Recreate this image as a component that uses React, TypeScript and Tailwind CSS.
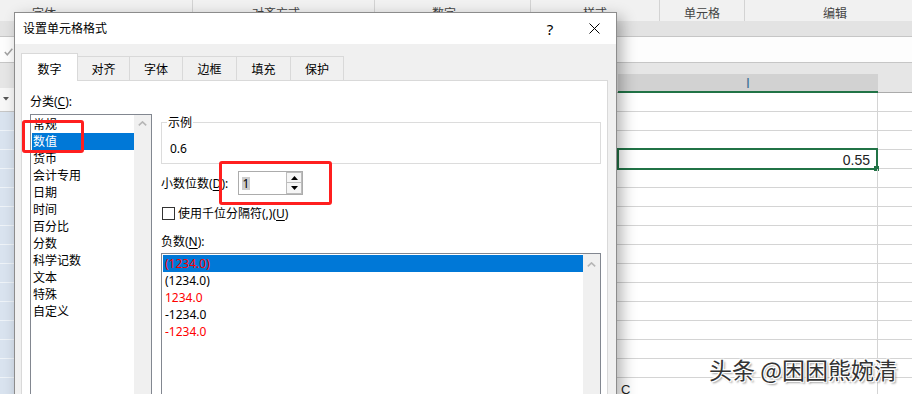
import React from "react";

const FONT = "font-['Noto_Sans','Noto_Sans_CJK_SC',sans-serif]";

const categories = ["常规", "数值", "货币", "会计专用", "日期", "时间", "百分比", "分数", "科学记数", "文本", "特殊", "自定义"];

const negatives = [
  { t: "(1234.0)", red: true },
  { t: "(1234.0)", red: false },
  { t: "1234.0", red: true },
  { t: "-1234.0", red: false },
  { t: "-1234.0", red: true },
];

const groups = [
  { label: "字体", cls: "w-[179px] pl-[18px] border-r" },
  { label: "对齐方式", cls: "w-[182px] pl-[59px] border-r" },
  { label: "数字", cls: "w-[156px] pl-[57px] border-r" },
  { label: "样式", cls: "w-[129px] pl-[52px] border-r" },
  { label: "单元格", cls: "w-[85px] pl-[24px] border-r" },
  { label: "编辑", cls: "flex-1 pl-[78px]" },
];

const tabs = [
  { label: "对齐", cls: "w-[52px]" },
  { label: "字体", cls: "w-[53px]" },
  { label: "边框", cls: "w-[54px]" },
  { label: "填充", cls: "w-[54px]" },
  { label: "保护", cls: "w-[53px]" },
];

function Chevron() {
  return (
    <svg width="9" height="5" viewBox="0 0 9 5" className="block">
      <path d="M0.8 4.4 L4.5 0.9 L8.2 4.4" fill="none" stroke="#b6b6b6" strokeWidth="1.6" />
    </svg>
  );
}

function Tri({ down }: { down?: boolean }) {
  return (
    <svg width="7" height="4" viewBox="0 0 7 4" className="block">
      {down ? <path d="M0 0 L7 0 L3.5 4 Z" fill="#000" /> : <path d="M0 4 L7 4 L3.5 0 Z" fill="#000" />}
    </svg>
  );
}

export default function App() {
  const rows = Array.from({ length: 16 });
  return (
    <div className={`relative w-[912px] h-[394px] overflow-hidden bg-white ${FONT}`}>
      <div className="flex h-full">
        {/* left strip */}
        <div className="w-[14px] shrink-0 flex flex-col">
          <div className="h-[21px] shrink-0 bg-[#f1f1f1]" />
          <div className="h-[16px] shrink-0 bg-[#e3e3e3] border-b border-[#c6c6c6]" />
          <div className="h-[26px] shrink-0 bg-[#fdfdfd] border-b border-[#c6c6c6] flex items-start pt-[11px] pl-[4px]">
            <svg width="9" height="8" viewBox="0 0 9 8" className="block">
              <path d="M0.8 4 L3.3 6.8 L8.3 0.8" fill="none" stroke="#a3a3a3" strokeWidth="1.5" />
            </svg>
          </div>
          <div className="h-[25px] shrink-0 bg-[#e6e6e6]" />
          <div className="h-[24px] shrink-0 bg-[#f7f7f7] border-b border-[#c6c6c6] flex items-center pl-[3px] pb-[2px]">
            <svg width="6" height="4" viewBox="0 0 6 4" className="block">
              <path d="M0 0 L6 0 L3 3.5 Z" fill="#555" />
            </svg>
          </div>
          {rows.map((_, i) => (
            <div key={i} className="h-[19px] shrink-0 bg-[#d9e3ef] border-b border-[#eef3f8]" />
          ))}
        </div>

        {/* right area */}
        <div className="flex-1 flex flex-col">
          <div className="flex h-[21px] shrink-0 bg-[#f1f1f1]">
            {groups.map((g) => (
              <div key={g.label} className={`${g.cls} h-full border-[#d3d3d3] pt-[7px] text-[12px] leading-[14px] text-[#444]`}>
                {g.label}
              </div>
            ))}
          </div>
          <div className="h-[16px] shrink-0 bg-[#e3e3e3] border-b border-[#c6c6c6]" />
          <div className="h-[26px] shrink-0 bg-[#fdfdfd] border-b border-[#c6c6c6]" />
          <div className="h-[11px] shrink-0 bg-[#e6e6e6]" />
          <div className="flex h-[19px] shrink-0">
            <div className="w-[604px] bg-[#e6e6e6] border-b border-[#ababab]" />
            <div className="w-[260px] bg-[#d2d2d2] border-b-2 border-[#217346] flex justify-center items-center font-['Liberation_Sans',sans-serif] text-[14px] leading-[16px] text-[#3b6f94]">
              I
            </div>
            <div className="flex-1 bg-[#e6e6e6] border-b border-[#ababab]" />
          </div>
          {rows.map((_, i) => (
            <div key={i} className="flex h-[19px] shrink-0 border-b border-[#d4d4d4]">
              <div className="w-[604px]" />
              <div className="relative w-[260px] border-r border-[#d4d4d4] font-['Liberation_Sans',sans-serif] text-[14px] text-[#222]">
                {i === 3 && (
                  <>
                    <div className="flex justify-end pr-[7px] pt-[2px] leading-[17px]">0.55</div>
                    <div className="absolute -top-[2px] -left-[1px] w-[261px] h-[22px] border-2 border-[#217346]" />
                    <div className="absolute left-[256px] top-[16px] w-[5px] h-[5px] bg-[#217346]" />
                  </>
                )}
                {i === 15 && <div className="pl-[3px] pt-[3px] leading-[17px] text-[13px]">C</div>}
              </div>
              <div className="flex-1" />
            </div>
          ))}
        </div>
      </div>

      {/* dialog */}
      <div className="absolute left-[14px] top-[12px] w-[603px] h-[400px] border border-[#8c8c8c] bg-[#f0f0f0] shadow-[5px_5px_14px_rgba(0,0,0,0.3)] flex flex-col">
        <div className="h-[31px] shrink-0 bg-white flex items-center pl-[8px] pr-[11px]">
          <span className="flex-1 text-[12px] leading-[16px] text-black">设置单元格格式</span>
          <span className="w-[22px] text-center text-[15px] leading-[16px] text-black">?</span>
          <span className="ml-[22px] w-[22px] flex justify-center">
            <svg width="11" height="11" viewBox="0 0 11 11" className="block">
              <path d="M0.5 0.5 L10.5 10.5 M10.5 0.5 L0.5 10.5" stroke="#000" strokeWidth="1" />
            </svg>
          </span>
        </div>
        <div className="flex-1 flex flex-col pl-[6px] pr-[8px] pt-[9px]">
          {/* tabs */}
          <div className="flex items-end h-[27px] shrink-0 text-[12px] text-black">
            <div className="relative z-10 w-[57px] h-[28px] -mb-px bg-white border-l border-t border-r border-[#d9d9d9] flex items-center justify-center pt-[5px] leading-[16px]">
              数字
            </div>
            {tabs.map((t) => (
              <div key={t.label} className={`${t.cls} h-[24px] border-t border-r border-[#d9d9d9] flex items-center justify-center pt-[3px] leading-[16px]`}>
                {t.label}
              </div>
            ))}
          </div>
          {/* panel */}
          <div className="flex-1 flex bg-white border border-[#d9d9d9] pl-[8px] pr-[6px] pt-[12px] text-[12px] text-black">
            {/* categories */}
            <div className="w-[122px] shrink-0 flex flex-col">
              <div className="leading-[17px]">
                分类(<span className="underline underline-offset-2">C</span>):
              </div>
              <div className="mt-[4px] flex-1 flex border border-[#828790]">
                <div className="flex-1 pl-[1px] pt-[1px]">
                  {categories.map((c, i) => (
                    <div key={c} className={`h-[17px] leading-[17px] pl-[1px] ${i === 1 ? "bg-[#0078d7] text-white" : ""}`}>
                      {c}
                    </div>
                  ))}
                </div>
                <div className="w-[17px] bg-[#f0f0f0] flex justify-center pt-[6px]">
                  <Chevron />
                </div>
              </div>
            </div>
            {/* right column */}
            <div className="ml-[9px] w-[440px] shrink-0 flex flex-col">
              <div className="relative mt-[29px] h-[42px] border border-[#dcdcdc]">
                <span className="absolute -top-[9px] left-[5px] bg-white px-[1px] leading-[17px]">示例</span>
                <div className="pl-[8px] pt-[17px] leading-[17px]">0.6</div>
              </div>
              <div className="mt-[7px] flex h-[24px] items-center">
                <div className="w-[77px] leading-[17px]">
                  小数位数(<span className="underline underline-offset-2">D</span>):
                </div>
                <div className="w-[65px] h-[24px] border border-[#acacac] flex">
                  <div className="flex-1 flex items-center pl-[3px]">
                    <span className="inline-block h-[13px] leading-[13px] bg-[#cccccc] px-[0.5px]">1</span>
                  </div>
                  <div className="w-[16px] flex flex-col">
                    <div className="h-[11px] border border-[#bdbdbd] bg-[#f6f6f6] flex items-center justify-center">
                      <Tri />
                    </div>
                    <div className="h-[11px] border border-t-0 border-[#bdbdbd] bg-[#f6f6f6] flex items-center justify-center">
                      <Tri down />
                    </div>
                  </div>
                </div>
              </div>
              <div className="mt-[12px] flex h-[13px] items-center">
                <div className="ml-[1px] w-[13px] h-[13px] border border-[#333] bg-white" />
                <div className="ml-[3px] leading-[17px]">
                  使用千位分隔符(,)(<span className="underline underline-offset-2">U</span>)
                </div>
              </div>
              <div className="mt-[13px] leading-[17px]">
                负数(<span className="underline underline-offset-2">N</span>):
              </div>
              <div className="mt-[3px] flex-1 flex border border-[#828790]">
                <div className="flex-1 pl-[1px] pt-[1px]">
                  {negatives.map((n, i) => (
                    <div
                      key={i}
                      className={`h-[17px] leading-[17px] pl-[2px] ${i === 0 ? "bg-[#0078d7]" : ""} ${n.red ? "text-[#ff0000]" : "text-black"}`}
                    >
                      {n.t}
                    </div>
                  ))}
                </div>
                <div className="w-[17px] bg-[#f0f0f0] flex justify-center pt-[8px]">
                  <Chevron />
                </div>
              </div>
            </div>
          </div>
        </div>
      </div>

      {/* annotation boxes */}
      <div className="absolute left-[22px] top-[120px] w-[62px] h-[33px] border-[3px] border-[#ff1f1f] rounded-[3px]" />
      <div className="absolute left-[219px] top-[161px] w-[113px] h-[44px] border-[3px] border-[#ff1f1f] rounded-[3px]" />

      {/* watermark */}
      <div className="absolute left-[709px] top-[355px] text-[23px] leading-[28px] text-[#333] font-['Noto_Sans_CJK_SC',sans-serif] [text-shadow:1px_1px_0_#fff,-1px_-1px_0_#fff,1px_-1px_0_#fff,-1px_1px_0_#fff,2px_2px_2px_rgba(0,0,0,0.4)]">
        头条 @困困熊婉清
      </div>
    </div>
  );
}
